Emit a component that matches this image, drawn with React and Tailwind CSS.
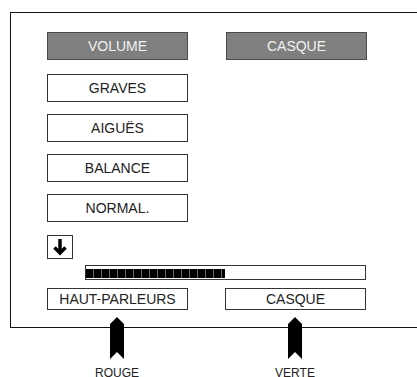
import React from 'react';

function GrayButton({ label }) {
  return (
    <div className="w-[141px] h-[28px] flex items-center justify-center bg-[#7f7f7f] border border-[#4a4a4a] text-[#f2f2f2] text-[14px]">
      {label}
    </div>
  );
}

function Box({ label, h = 'h-[28px]', w = 'w-[141px]' }) {
  return (
    <div className={`${w} ${h} flex items-center justify-center bg-white border border-[#333] text-[#222] text-[14px]`}>
      {label}
    </div>
  );
}

function Marker() {
  return (
    <svg width="14" height="42" viewBox="0 0 14 42">
      <polygon points="7,0 14,7 14,42 7,35 0,42 0,7" fill="#000" />
    </svg>
  );
}

export default function App() {
  return (
    <div className="w-[417px] h-[377px] overflow-hidden bg-white" style={{ fontFamily: '"Liberation Sans", Arial, sans-serif' }}>
      {/* panel, right edge runs off the picture */}
      <div className="ml-[10px] mt-[12px] w-[420px] border-l border-t border-b border-[#111] pl-[36px] pt-[19px] pb-[17px] flex flex-col">
        <div className="flex gap-[38px]">
          <GrayButton label="VOLUME" />
          <GrayButton label="CASQUE" />
        </div>
        <div className="mt-[14px] flex flex-col gap-[12px]">
          <Box label="GRAVES" />
          <Box label="AIGUËS" />
          <Box label="BALANCE" />
          <Box label="NORMAL." />
        </div>
        <div className="mt-[13px] w-[26px] h-[24px] border border-[#333] flex items-center justify-center">
          <svg width="16" height="18" viewBox="0 0 16 18">
            <path d="M8 1 V15" stroke="#000" strokeWidth="3.5" />
            <path d="M2.5 9.5 L8 15 L13.5 9.5" stroke="#000" strokeWidth="3.5" fill="none" strokeLinejoin="miter" />
          </svg>
        </div>
        <div className="mt-[6px] ml-[38px] w-[281px] h-[15px] border border-[#333] pt-[3px]">
          <div className="w-[139px] h-[9px] bg-[repeating-linear-gradient(90deg,#000_0_7px,#666_7px_8px)]" />
        </div>
        <div className="mt-[8px] flex gap-[37px]">
          <Box label="HAUT-PARLEURS" h="h-[22px]" />
          <Box label="CASQUE" h="h-[22px]" w="w-[141px]" />
        </div>
      </div>
      {/* pointers and colour labels */}
      <div className="-mt-[11px] ml-[77px] flex gap-[98px]">
        <div className="w-[80px] flex flex-col items-center">
          <Marker />
          <div className="mt-[7px] text-[12px] leading-[14px] text-[#222]">ROUGE</div>
        </div>
        <div className="w-[80px] flex flex-col items-center">
          <Marker />
          <div className="mt-[7px] text-[12px] leading-[14px] text-[#222]">VERTE</div>
        </div>
      </div>
    </div>
  );
}
